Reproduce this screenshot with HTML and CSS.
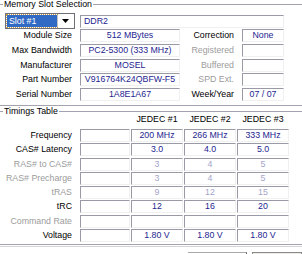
FILE: index.html
```html
<!DOCTYPE html>
<html lang="en">

<head>
    <meta charset="UTF-8">
    <meta name="viewport" content="width=device-width, initial-scale=1.0">
    <title>SPD</title>
    <link rel="stylesheet" href="styles.css">
</head>

<body>
    <div id="spd">
        <fieldset class="group slot-group">
            <legend>Memory Slot Selection</legend>
            <div class="slot-grid">
                <div class="slot-select">
                    <span class="slot-value">Slot #1</span>
                    <span class="slot-arrow">
                        <svg width="7" height="4" viewBox="0 0 7 4"><path d="M0 0h7L3.5 4z" fill="#000" /></svg>
                    </span>
                </div>
                <div class="field field-type">DDR2</div>

                <div class="label">Module Size</div>
                <div class="field">512 MBytes</div>
                <div class="label">Correction</div>
                <div class="field">None</div>

                <div class="label">Max Bandwidth</div>
                <div class="field">PC2-5300 (333 MHz)</div>
                <div class="label off">Registered</div>
                <div class="field"></div>

                <div class="label">Manufacturer</div>
                <div class="field">MOSEL</div>
                <div class="label off">Buffered</div>
                <div class="field"></div>

                <div class="label">Part Number</div>
                <div class="field">V916764K24QBFW-F5</div>
                <div class="label off">SPD Ext.</div>
                <div class="field"></div>

                <div class="label">Serial Number</div>
                <div class="field">1A8E1A67</div>
                <div class="label">Week/Year</div>
                <div class="field">07 / 07</div>
            </div>
        </fieldset>

        <fieldset class="group timing-group">
            <legend>Timings Table</legend>
            <div class="timing-head">
                <span></span>
                <span></span>
                <span>JEDEC #1</span>
                <span>JEDEC #2</span>
                <span>JEDEC #3</span>
            </div>
            <div class="timing-grid">
                <div class="label">Frequency</div>
                <div class="field"></div>
                <div class="field">200 MHz</div>
                <div class="field">266 MHz</div>
                <div class="field">333 MHz</div>

                <div class="label">CAS# Latency</div>
                <div class="field"></div>
                <div class="field">3.0</div>
                <div class="field">4.0</div>
                <div class="field">5.0</div>

                <div class="label off">RAS# to CAS#</div>
                <div class="field"></div>
                <div class="field dim">3</div>
                <div class="field dim">4</div>
                <div class="field dim">5</div>

                <div class="label off">RAS# Precharge</div>
                <div class="field"></div>
                <div class="field dim">3</div>
                <div class="field dim">4</div>
                <div class="field dim">5</div>

                <div class="label off">tRAS</div>
                <div class="field"></div>
                <div class="field dim">9</div>
                <div class="field dim">12</div>
                <div class="field dim">15</div>

                <div class="label">tRC</div>
                <div class="field"></div>
                <div class="field">12</div>
                <div class="field">16</div>
                <div class="field">20</div>

                <div class="label off">Command Rate</div>
                <div class="field"></div>
                <div class="field"></div>
                <div class="field"></div>
                <div class="field"></div>

                <div class="label">Voltage</div>
                <div class="field"></div>
                <div class="field">1.80 V</div>
                <div class="field">1.80 V</div>
                <div class="field">1.80 V</div>
            </div>
        </fieldset>

        <div class="sep"></div>

        <div class="bottom-bar">
            <div class="version-box"></div>
            <div class="ok-button"></div>
        </div>
    </div>
</body>

</html>
```

FILE: styles.css
```css
html,
body {
    margin: 0;
    padding: 0;
    height: 254px;
    overflow: hidden;
    background: #ffffff;
}

body {
    font-family: "Liberation Sans", Arial, sans-serif;
    font-size: 8.8px;
    color: #000;
}

#spd {
    width: 302px;
}

.group {
    margin: 0 -2px;
    border: 1px solid #a4a4b0;
    padding: 0 0 0 1px;
    min-width: 0;
}

.group legend {
    padding: 0 1px;
    margin-left: 3px;
    line-height: 8px;
}

.slot-group {
    padding-top: 6.5px;
    padding-bottom: 4px;
}

.slot-grid {
    display: grid;
    grid-template-columns: 80px 100px 62px 42px;
    grid-template-rows: repeat(6, 13px);
    row-gap: 1.7px;
}

.label {
    text-align: right;
    padding-right: 8px;
    line-height: 13px;
    white-space: nowrap;
}

.label.off {
    color: #9c9c9c;
}

.field {
    box-sizing: border-box;
    height: 13px;
    line-height: 11px;
    border-top: 1px solid #9a9aa6;
    border-left: 1px solid #9a9aa6;
    border-right: 1px solid #f0f0f0;
    border-bottom: 1px solid #f0f0f0;
    text-align: center;
    color: #1e1e90;
    white-space: nowrap;
    overflow: hidden;
}

.field.dim {
    color: #a4a4c8;
}

.field-type {
    grid-column: 2 / 5;
    text-align: left;
    padding-left: 3px;
}

.slot-select {
    box-sizing: border-box;
    align-self: center;
    margin-left: 5px;
    width: 70px;
    height: 16px;
    border: 1px solid #6f6f78;
    padding: 1px;
    display: flex;
    background: #fff;
}

.slot-value {
    flex: 1;
    background: #316ac5;
    color: #fff;
    line-height: 12px;
    padding-left: 2px;
    outline: 1px dotted #c89a4a;
}

.slot-arrow {
    width: 15px;
    display: flex;
    align-items: center;
    justify-content: center;
    border-left: 1px solid #c0c0c0;
}

.timing-group {
    margin-top: 1.5px;
    padding-top: 0;
    padding-bottom: 1.5px;
}

.timing-head,
.timing-grid {
    display: grid;
    grid-template-columns: 79px 50px 52px 52px 52px;
    column-gap: 1px;
}

.timing-head {
    height: 8px;
    line-height: 8px;
    margin-bottom: 5.5px;
}

.timing-head span {
    text-align: center;
    white-space: nowrap;
}

.timing-grid {
    grid-template-rows: repeat(8, 13px);
    row-gap: 1.3px;
}

.timing-grid .label {
    padding-right: 7px;
}

.sep {
    margin-top: 1px;
    border-top: 1px solid #d4d4d8;
}

.bottom-bar {
    display: flex;
    margin-top: 5px;
}

.version-box {
    margin-left: 188px;
    width: 59px;
    height: 12px;
    box-sizing: border-box;
    border-top: 1px solid #a8a8a8;
    border-right: 1px solid #606060;
    background: #fff;
}

.ok-button {
    margin-left: 5px;
    flex: 1;
    height: 12px;
    box-sizing: border-box;
    border: 1px solid #8a8a8a;
    background: #ecebe6;
}
```
